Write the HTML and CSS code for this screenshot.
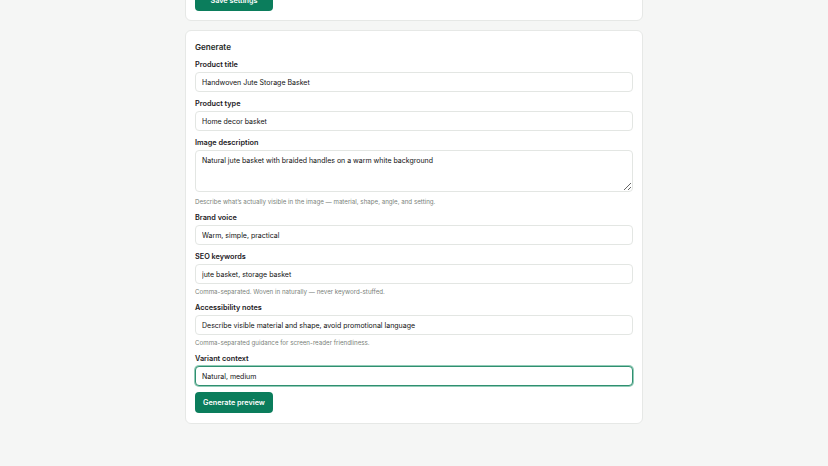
FILE: index.html
```html
<!DOCTYPE html>
<html lang="en">

<head>
  <meta charset="UTF-8">
  <meta name="viewport" content="width=device-width, initial-scale=1.0">
  <title>Generate</title>
  <link rel="stylesheet" href="styles.css">
</head>

<body>
  <main class="page">
    <section class="card settings">
      <button class="btn" type="button">Save settings</button>
    </section>

    <section class="card">
      <h2 class="card-title">Generate</h2>

      <div class="field">
        <label for="title">Product title</label>
        <input id="title" type="text" value="Handwoven Jute Storage Basket">
      </div>

      <div class="field">
        <label for="type">Product type</label>
        <input id="type" type="text" value="Home decor basket">
      </div>

      <div class="field">
        <label for="desc">Image description</label>
        <textarea id="desc">Natural jute basket with braided handles on a warm white background</textarea>
        <p class="hint">Describe what’s actually visible in the image — material, shape, angle, and setting.</p>
      </div>

      <div class="field">
        <label for="voice">Brand voice</label>
        <input id="voice" type="text" value="Warm, simple, practical">
      </div>

      <div class="field">
        <label for="seo">SEO keywords</label>
        <input id="seo" type="text" value="jute basket, storage basket">
        <p class="hint">Comma-separated. Woven in naturally — never keyword-stuffed.</p>
      </div>

      <div class="field">
        <label for="a11y">Accessibility notes</label>
        <input id="a11y" type="text" value="Describe visible material and shape, avoid promotional language">
        <p class="hint">Comma-separated guidance for screen-reader friendliness.</p>
      </div>

      <div class="field">
        <label for="variant">Variant context</label>
        <input id="variant" class="focused" type="text" value="Natural, medium">
      </div>

      <button class="btn" type="button">Generate preview</button>
    </section>
  </main>
</body>

</html>
```

FILE: styles.css
```css
* {
  box-sizing: border-box;
  margin: 0;
  padding: 0;
}

html,
body {
  background: #f5f6f5;
}

body {
  font-family: Inter, "Liberation Sans", sans-serif;
  font-size: 7.5px;
  line-height: 1.2;
  color: #1f2420;
}

.page {
  width: 458px;
  margin: -21px auto 0;
  display: flex;
  flex-direction: column;
  gap: 9px;
}

.card {
  background: #fff;
  border: 1px solid #e6e8e6;
  border-radius: 6px;
  padding: 9px 9px 10px;
  display: flex;
  flex-direction: column;
  gap: 6px;
}

.settings {
  padding: 10px 9px 9px;
}

.card-title {
  font-size: 8.1px;
  font-weight: 600;
  line-height: 12px;
  margin-top: 1px;
  color: #262a27;
}

.field {
  display: flex;
  flex-direction: column;
}

.field label {
  font-size: 7.3px;
  font-weight: 600;
  line-height: 11px;
  margin-bottom: 2px;
  color: #1c201d;
}

.field input,
.field textarea {
  font-family: inherit;
  font-size: 7px;
  color: #111;
  width: 100%;
  border: 1px solid #e3e6e3;
  border-radius: 4px;
  padding: 0 6px;
  background: #fff;
  outline: none;
}

.field input {
  height: 20px;
}

.field textarea {
  height: 42px;
  margin-bottom: 2px;
  padding-top: 4px;
  line-height: 11px;
  resize: vertical;
}

.field input.focused {
  border: 1px solid #2f8f70;
  box-shadow: 0 0 0 1px #93ccb8;
}

.hint {
  font-size: 6.2px;
  line-height: 9px;
  color: #7a7f7b;
  margin-top: 3px;
}

.btn {
  align-self: flex-start;
  font-family: inherit;
  font-size: 7.25px;
  font-weight: 600;
  color: #fff;
  background: #0b7d5c;
  border: none;
  border-radius: 4px;
  height: 21px;
  width: 78px;
}
```
